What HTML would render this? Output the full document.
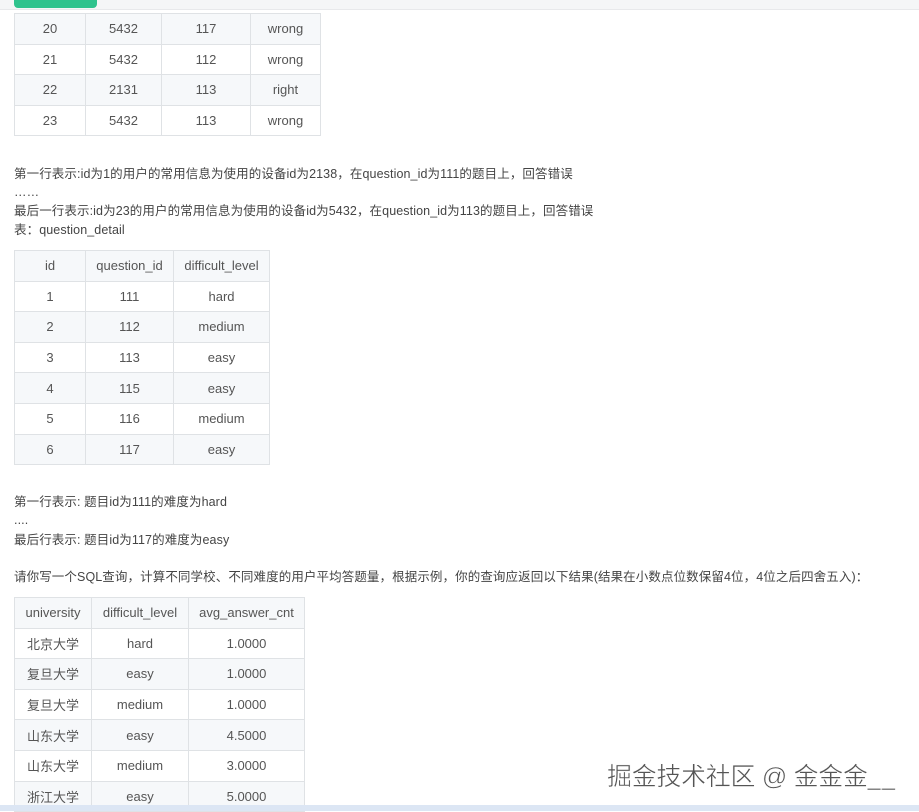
<!DOCTYPE html>
<html><head><meta charset="utf-8"><style>
body{margin:0;width:919px;height:811px;background:#fff;position:relative;overflow:hidden;font-family:"Liberation Sans","Noto Sans CJK SC",sans-serif;color:#444;}
.top{position:absolute;left:0;top:0;width:919px;height:9px;background:#f5f6f7;border-bottom:1px solid #e8e9eb;}
.btn{position:absolute;left:14px;top:0;width:83px;height:8px;background:#2fc38d;border-radius:0 0 4px 4px;}
table{position:absolute;border-collapse:collapse;font-size:13px;color:#555;}
td{border:1px solid #dfe2e5;text-align:center;padding:0;height:29.6px;}
tr.g td{background:#f6f8fa;}
.t{position:absolute;left:14px;font-size:12.5px;white-space:nowrap;letter-spacing:0.1px;color:#444;line-height:16px;}
.wm{position:absolute;left:607px;top:757px;font-size:25px;color:#555;white-space:nowrap;-webkit-text-stroke:0.5px #fff;text-shadow:0 0 2px #fff,1px 1px 0 #fff;letter-spacing:-0.3px;}
.bot{position:absolute;left:0;top:805px;width:919px;height:6px;background:#dce6f4;}
</style></head><body>
<div class="top"></div><div class="btn"></div>
<table style="left:14px;top:13px;width:307px">
<colgroup><col style="width:71px"><col style="width:76px"><col style="width:89px"><col style="width:70px"></colgroup>
<tr class="g"><td>20</td><td>5432</td><td>117</td><td>wrong</td></tr>
<tr><td>21</td><td>5432</td><td>112</td><td>wrong</td></tr>
<tr class="g"><td>22</td><td>2131</td><td>113</td><td>right</td></tr>
<tr><td>23</td><td>5432</td><td>113</td><td>wrong</td></tr>
</table>
<div class="t" style="top:166px">第一行表示:id为1的用户的常用信息为使用的设备id为2138，在question_id为111的题目上，回答错误</div>
<div class="t" style="top:184px">……</div>
<div class="t" style="top:203px">最后一行表示:id为23的用户的常用信息为使用的设备id为5432，在question_id为113的题目上，回答错误</div>
<div class="t" style="top:222px">表：question_detail</div>
<table style="left:14px;top:250px;width:256px">
<colgroup><col style="width:71px"><col style="width:88px"><col style="width:96px"></colgroup>
<tr class="g"><td>id</td><td>question_id</td><td>difficult_level</td></tr>
<tr><td>1</td><td>111</td><td>hard</td></tr>
<tr class="g"><td>2</td><td>112</td><td>medium</td></tr>
<tr><td>3</td><td>113</td><td>easy</td></tr>
<tr class="g"><td>4</td><td>115</td><td>easy</td></tr>
<tr><td>5</td><td>116</td><td>medium</td></tr>
<tr class="g"><td>6</td><td>117</td><td>easy</td></tr>
</table>
<div class="t" style="top:494px">第一行表示: 题目id为111的难度为hard</div>
<div class="t" style="top:512px">....</div>
<div class="t" style="top:532px">最后行表示: 题目id为117的难度为easy</div>
<div class="t" style="top:569px">请你写一个SQL查询，计算不同学校、不同难度的用户平均答题量，根据示例，你的查询应返回以下结果(结果在小数点位数保留4位，4位之后四舍五入)：</div>
<table style="left:14px;top:597px;width:291px">
<colgroup><col style="width:77px"><col style="width:97px"><col style="width:116px"></colgroup>
<tr class="g"><td>university</td><td>difficult_level</td><td>avg_answer_cnt</td></tr>
<tr><td>北京大学</td><td>hard</td><td>1.0000</td></tr>
<tr class="g"><td>复旦大学</td><td>easy</td><td>1.0000</td></tr>
<tr><td>复旦大学</td><td>medium</td><td>1.0000</td></tr>
<tr class="g"><td>山东大学</td><td>easy</td><td>4.5000</td></tr>
<tr><td>山东大学</td><td>medium</td><td>3.0000</td></tr>
<tr class="g"><td>浙江大学</td><td>easy</td><td>5.0000</td></tr>
</table>
<div class="wm">掘金技术社区 @ 金金金__</div>
<div class="bot"></div>
</body></html>
